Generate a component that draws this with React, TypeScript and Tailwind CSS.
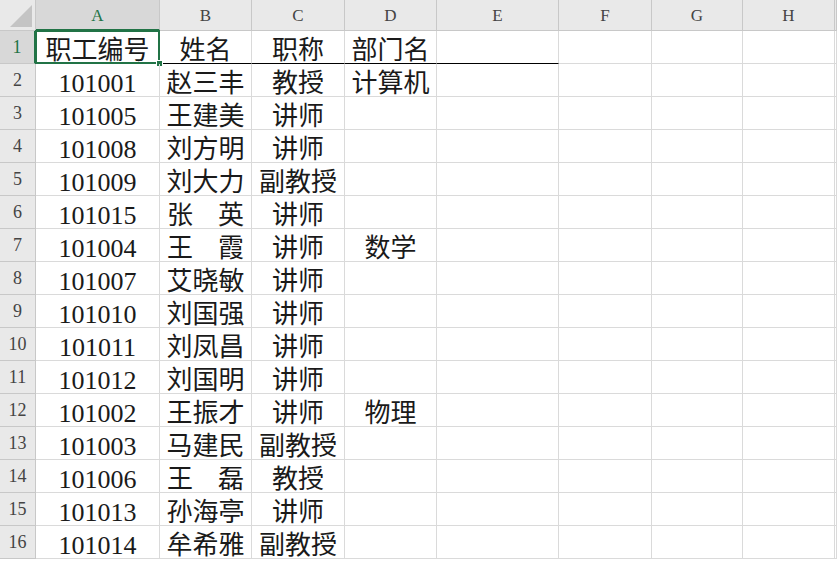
const cols = ['A', 'B', 'C', 'D', 'E', 'F', 'G', 'H', '']

const rows: [string, string, string, string][] = [
  ['职工编号', '姓名', '职称', '部门名'],
  ['101001', '赵三丰', '教授', '计算机'],
  ['101005', '王建美', '讲师', ''],
  ['101008', '刘方明', '讲师', ''],
  ['101009', '刘大力', '副教授', ''],
  ['101015', '张 英', '讲师', ''],
  ['101004', '王 霞', '讲师', '数学'],
  ['101007', '艾晓敏', '讲师', ''],
  ['101010', '刘国强', '讲师', ''],
  ['101011', '刘凤昌', '讲师', ''],
  ['101012', '刘国明', '讲师', ''],
  ['101002', '王振才', '讲师', '物理'],
  ['101003', '马建民', '副教授', ''],
  ['101006', '王 磊', '教授', ''],
  ['101013', '孙海亭', '讲师', ''],
  ['101014', '牟希雅', '副教授', ''],
]

const font = { fontFamily: '"Liberation Serif", "Noto Sans CJK SC", serif' }

function Name({ value }: { value: string }) {
  // 两字姓名分散对齐
  if (value.includes(' ')) {
    const [a, b] = value.split(' ')
    return (
      <div className="flex w-full justify-between px-[7px]">
        <span>{a}</span>
        <span>{b}</span>
      </div>
    )
  }
  return <span>{value}</span>
}

export default function App() {
  return (
    <div className="h-[562px] w-[837px] overflow-hidden bg-white" style={font}>
      <div className="grid grid-cols-[36px_124px_92px_93px_92px_122px_93px_91px_92px_1fr] text-[#1a1a1a]">
        {/* 左上角 */}
        <div className="relative h-[31px] border-b border-r border-[#c8c8c8] bg-[#e9e9e9]">
          <div className="absolute bottom-[3px] right-[3px] h-0 w-0 border-b-[22px] border-l-[22px] border-b-[#c4c4c4] border-l-transparent" />
        </div>
        {cols.map((c, i) => (
          <div
            key={i}
            className={
              i === 0
                ? 'flex h-[31px] items-end justify-center border-b-2 border-r border-b-[#217346] border-r-[#c8c8c8] bg-[#d8d8d8] pb-[1px] text-[17px] text-[#217346]'
                : 'flex h-[31px] items-end justify-center border-b border-r border-[#c8c8c8] bg-[#e9e9e9] pb-[2px] text-[17px] text-[#444]'
            }
          >
            {c}
          </div>
        ))}

        {rows.map((r, ri) => (
          <Row key={ri} index={ri} r={r} />
        ))}
      </div>
    </div>
  )
}

function Row({ index, r }: { index: number; r: [string, string, string, string] }) {
  const first = index === 0
  const line = first ? 'border-b border-b-black' : 'border-b border-b-[#dadada]'
  const cell = `flex h-[33px] items-end justify-center border-r border-r-[#dadada] text-[26px] leading-[25px] ${line}`
  return (
    <>
      <div
        className={
          first
            ? 'flex h-[33px] items-end justify-center border-b border-r-2 border-b-[#c8c8c8] border-r-[#217346] bg-[#d8d8d8] pb-[2px] text-[18px] text-[#217346]'
            : 'flex h-[33px] items-end justify-center border-b border-r border-[#c8c8c8] bg-[#e9e9e9] pb-[2px] text-[18px] text-[#444]'
        }
      >
        {index + 1}
      </div>
      <div className={`relative ${cell}`}>
        {r[0]}
        {first && (
          <>
            <div className="pointer-events-none absolute -bottom-px -left-px -right-px -top-px border-2 border-[#217346]" />
            <div className="absolute -bottom-[4px] -right-[4px] h-[7px] w-[7px] border border-white bg-[#217346]" />
          </>
        )}
      </div>
      <div className={cell}>
        <Name value={r[1]} />
      </div>
      <div className={cell}>{r[2]}</div>
      <div className={cell}>{r[3]}</div>
      <div className={`h-[33px] border-r border-r-[#dadada] ${line}`} />
      <div className="h-[33px] border-b border-r border-[#dadada]" />
      <div className="h-[33px] border-b border-r border-[#dadada]" />
      <div className="h-[33px] border-b border-r border-[#dadada]" />
      <div className="h-[33px] border-b border-r border-[#dadada]" />
    </>
  )
}
